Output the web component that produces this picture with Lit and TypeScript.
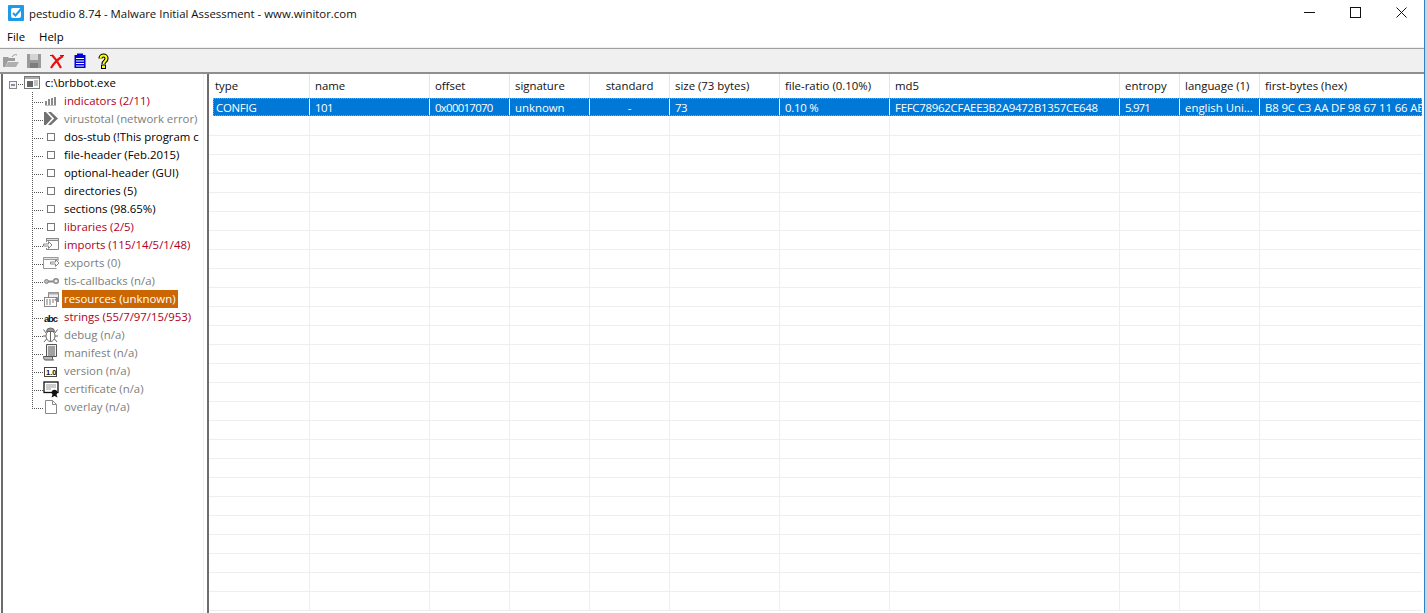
import { LitElement, html, css, svg } from "lit";
import { customElement } from "lit/decorators.js";

const guide = (last: boolean) => svg`
  <path d="M32.500 ${last ? "0V11" : "0V18"}" stroke="#555" stroke-dasharray="1 1" fill="none"/>
  <path d="M34 10.500H44" stroke="#555" stroke-dasharray="1 1" fill="none"/>`;

const icons: Record<string, unknown> = {
  bars: svg`<g fill="#8a8a8a"><rect x="45" y="9" width="2" height="4"/><rect x="48" y="7" width="2" height="6"/><rect x="51" y="6" width="2" height="7"/><rect x="54" y="5" width="2" height="8"/></g><path d="M45 13.500h11" stroke="#c4c4c4"/>`,
  vt: svg`<path d="M44 2h7l7 6.500-7 6.500h-7z" fill="#707070"/><path d="M46.500 1.500l6.500 7-6.500 7" fill="none" stroke="#fff" stroke-width="1.700"/>`,
  square: svg`<rect x="47.500" y="5.500" width="7" height="7" fill="#fff" stroke="#777"/>`,
  imp: svg`<path d="M46.500 6V2.500h12v11h-12V12" fill="#fff" stroke="#888"/><path d="M46.500 2.500h12v2h-12z" fill="#ddd" stroke="#888"/><path d="M43.500 8h5V5.500l3.500 3.500-3.500 3.500V10h-5z" fill="#fff" stroke="#888"/>`,
  exp: svg`<path d="M58 7V3.500H43.500v11h13" fill="#fff" stroke="#999"/><path d="M43.500 3.500h14.500v2H43.500z" fill="#e4e4e4" stroke="#999"/><path d="M50.500 8h5V5.500l3.500 3.500-3.500 3.500V10h-5z" fill="#fff" stroke="#888"/>`,
  key: svg`<circle cx="56" cy="9" r="2.300" fill="#eee" stroke="#888" stroke-width="1.400"/><path d="M45 9.500h8" stroke="#888" stroke-width="2"/><circle cx="46.500" cy="9.500" r="2" fill="#bbb" stroke="#888"/>`,
  res: svg`<rect x="48.500" y="2.500" width="10" height="9" fill="#eee" stroke="#888"/><rect x="48.500" y="2.500" width="10" height="2" fill="#aaa"/><rect x="44.500" y="7.500" width="12" height="9" fill="#fff" stroke="#888"/><path d="M46 10h2m1 0h2m1 0h2M46 12h2m1 0h2m1 0h2M46 14h2m1 0h2" stroke="#777"/><path d="M54 10l5-4v6z" fill="#888"/>`,
  bug: svg`<ellipse cx="50.500" cy="10" rx="4.500" ry="5.500" fill="#fff" stroke="#666"/><path d="M46.500 5.500a4 3.500 0 0 1 8 0z" fill="#999" stroke="#666"/><path d="M50.500 5v10.500M46 7l-2.500-3.500M55 7l2.500-3.500M46 10h-3M55 10h3M46.500 13l-2.500 3M54.500 13l2.500 3" stroke="#666" fill="none"/>`,
  man: svg`<path d="M46.500 .5h10v12h-10z" fill="#eee" stroke="#555"/><path d="M48 3h7M48 5h7M48 7h7M48 9h7M48 11h7" stroke="#555"/><path d="M43.500 12.500h9v2c0 1 .5 1.500 1 1.500h-8.500c-1 0-1.500-2-1.500-3.500z" fill="#bbb" stroke="#555"/>`,
  cert: svg`<rect x="44" y="2" width="14" height="10.500" fill="#fff" stroke="#111" stroke-width="1.300"/><path d="M46 5h10M46 7h10M46 9h5" stroke="#999"/><circle cx="54.500" cy="12.500" r="2.800" fill="#111"/><path d="M52.500 14.500l-1 3 3-1.500 3 1.500-1-3" fill="#111"/>`,
  page: svg`<path d="M45.500 2.500h7l4 4v9h-11z" fill="#fff" stroke="#888"/><path d="M52.500 2.500v4h4" fill="none" stroke="#888"/>`,
};

interface Item { icon: string; text: string; tone: "red" | "grey" | "black"; sel?: boolean; }
const items: Item[] = [
  { icon: "bars", text: "indicators (2/11)", tone: "red" },
  { icon: "vt", text: "virustotal (network error)", tone: "grey" },
  { icon: "square", text: "dos-stub (!This program c", tone: "black" },
  { icon: "square", text: "file-header (Feb.2015)", tone: "black" },
  { icon: "square", text: "optional-header (GUI)", tone: "black" },
  { icon: "square", text: "directories (5)", tone: "black" },
  { icon: "square", text: "sections (98.65%)", tone: "black" },
  { icon: "square", text: "libraries (2/5)", tone: "red" },
  { icon: "imp", text: "imports (115/14/5/1/48)", tone: "red" },
  { icon: "exp", text: "exports (0)", tone: "grey" },
  { icon: "key", text: "tls-callbacks (n/a)", tone: "grey" },
  { icon: "res", text: "resources (unknown)", tone: "grey", sel: true },
  { icon: "abc", text: "strings (55/7/97/15/953)", tone: "red" },
  { icon: "bug", text: "debug (n/a)", tone: "grey" },
  { icon: "man", text: "manifest (n/a)", tone: "grey" },
  { icon: "ver", text: "version (n/a)", tone: "grey" },
  { icon: "cert", text: "certificate (n/a)", tone: "grey" },
  { icon: "page", text: "overlay (n/a)", tone: "grey" },
];

const cols: { h: string; w: number; v: string; c?: boolean; cls?: string }[] = [
  { h: "type", w: 101, v: "CONFIG", cls: "first t3" },
  { h: "name", w: 120, v: "101", cls: "t6" },
  { h: "offset", w: 80, v: "0x00017070", cls: "t7" },
  { h: "signature", w: 80, v: "unknown" },
  { h: "standard", w: 80, v: "-", c: true },
  { h: "size (73 bytes)", w: 110, v: "73", cls: "t6" },
  { h: "file-ratio (0.10%)", w: 110, v: "0.10 %", cls: "t3" },
  { h: "md5", w: 230, v: "FEFC78962CFAEE3B2A9472B1357CE648", cls: "t3" },
  { h: "entropy", w: 60, v: "5.971", cls: "t8" },
  { h: "language (1)", w: 80, v: "english Uni..." },
  { h: "first-bytes (hex)", w: 162, v: "B8 9C C3 AA DF 98 67 11 66 AE", cls: "t1" },
];

@customElement("app-root")
export class AppRoot extends LitElement {
  static styles = css`
    :host { display: flex; width: 1427px; height: 613px; overflow: hidden; background: #fff;
      font-family: "Open Sans", "Noto Sans", sans-serif; font-size: 11.4px; color: #000; }
    .window { flex: 1; min-width: 0; display: flex; flex-direction: column; }
    .edge { width: 3px; flex: none; box-sizing: border-box; background: #ccd3d9; border-left: 1px solid #2f80c4; }
    .titlebar { height: 26px; display: flex; align-items: center; padding-left: 8px; flex: none; }
    .appicon { width: 16px; height: 16px; margin-right: 5px; flex: none; }
    .title { flex: 1; white-space: nowrap; color: #111; }
    .winbtns { display: flex; align-self: flex-start; }
    .winbtn { width: 46px; height: 24px; display: flex; align-items: center; justify-content: center; }
    .menubar { height: 22px; box-sizing: border-box; display: flex; align-items: center; padding-left: 7px; gap: 14px; flex: none; border-bottom: 1px solid #f0f0f0; }
    .toolbar { height: 23px; flex: none; background: #f0f0f0; border-top: 1px solid #a0a0a0; border-bottom: 2px solid #8f8f8f;
      display: flex; align-items: center; padding-left: 3px; gap: 7px; }
    .toolbar svg { width: 16px; height: 16px; flex: none; }
    .main { flex: 1; display: flex; min-height: 0; background: #fff; }
    .tree { width: 200px; flex: none; margin-left: 1px; border-left: 2px solid #6d6d6d; overflow: hidden; }
    .row { height: 18px; display: flex; align-items: center; white-space: nowrap; }
    .row svg { width: 59px; height: 18px; flex: none; }
    .lbl { line-height: 16px; padding: 0 2px; overflow: hidden; max-width: 135px; }
    .rootrow { display: flex; align-items: center; height: 18px; white-space: nowrap; }
    .rootrow svg { width: 42px; height: 18px; flex: none; }
    .root { line-height: 16px; }
    .red { color: #b0001e; }
    .grey { color: #7d7d7d; }
    .black { color: #000; }
    .sel { background: #cc6600; color: #fff; height: 18px; line-height: 18px; max-width: none; }
    .splitter { width: 4px; flex: none; box-sizing: border-box; border-left: 1px solid #eeeeee; }
    .panel { flex: 1; min-width: 0; border-left: 2px solid #6d6d6d; display: flex; flex-direction: column; overflow: hidden; }
    .hdr { display: flex; height: 24px; flex: none; margin-right: 2px; overflow: hidden; }
    .hdr div { box-sizing: border-box; border-right: 1px solid #e5e5e5; padding-left: 5px; line-height: 24px; white-space: nowrap; overflow: hidden; flex: none; color: #111; }
    .hdr div.first { padding-left: 6px; }
    .hdr div.c { padding-left: 0; text-align: center; }
    .hdr div:last-child { border-right: 0; }
    .body { flex: 1; min-height: 0; margin-right: 2px; overflow: hidden; }
    .tr { display: flex; height: 19px; box-sizing: border-box; border-bottom: 1px solid #eeeeee; }
    .td { flex: none; box-sizing: border-box; border-right: 1px solid #eeeeee; padding-left: 5px; line-height: 18px; white-space: nowrap; overflow: hidden; }
    .td.c { padding-left: 0; text-align: center; }
    .td:last-child { border-right: 0; }
    .tr.selected { background: #0078d7; color: #fff; margin: 0 0 1px 4px; outline: 1px dotted #e8902f; outline-offset: -1px; height: 18px; border-bottom: 0; }
    .tr.selected .td { border-right: 1px solid #fff; line-height: 20px; }
    .tr.selected .td:last-child { border-right: 0; }
    .tr.selected .td.first { padding-left: 3px; }
    .t1 { letter-spacing: -0.12px; }
    .t3 { letter-spacing: -0.25px; }
    .t6 { letter-spacing: -0.5px; }
    .t7 { letter-spacing: -0.7px; }
    .t8 { letter-spacing: -0.8px; }
  `;

  private iconFor(i: Item) {
    if (i.icon === "abc")
      return svg`<text x="44" y="13.500" font-family="Liberation Sans, sans-serif" font-size="9.500" font-weight="700" fill="#111" textLength="14">abc</text>`;
    if (i.icon === "ver")
      return svg`<rect x="44.500" y="5.500" width="12" height="9" fill="#fff" stroke="#444"/><text x="46" y="13" font-family="Liberation Sans, sans-serif" font-size="7.500" font-weight="700" fill="#111">1.0</text>`;
    return icons[i.icon];
  }

  render() {
    return html`
      <div class="window">
        <div class="titlebar">
          <svg class="appicon" viewBox="0 0 16 16"><rect width="16" height="16" rx="1" fill="#1e9be8"/><rect x="3" y="3" width="10" height="10" rx="2" fill="#fff"/><path d="M5 8l2.500 2.500L14 3" fill="none" stroke="#1e9be8" stroke-width="2"/></svg>
          <span class="title">pestudio 8.74 - Malware Initial Assessment - www.winitor.com</span>
          <div class="winbtns">
            <div class="winbtn"><svg width="11" height="11"><path d="M0 5.500h11" stroke="#111"/></svg></div>
            <div class="winbtn"><svg width="11" height="11"><rect x=".5" y=".5" width="10" height="10" fill="none" stroke="#111"/></svg></div>
            <div class="winbtn"><svg width="11" height="11"><path d="M.5.5l10 10M10.500.5l-10 10" stroke="#111"/></svg></div>
          </div>
        </div>
        <div class="menubar"><span>File</span><span>Help</span></div>
        <div class="toolbar">
          <svg viewBox="0 0 16 16"><path d="M0 14V4h5l1 1h6v3H5l-3 6z" fill="#9c9c9c"/><path d="M2 14l3-5h11l-3 5z" fill="#b0b0b0"/><path d="M9 4c1-2 3-3 5-2" stroke="#999" fill="none"/></svg>
          <svg viewBox="0 0 16 16"><path d="M1 1h14v14H1z" fill="#9a9a9a"/><rect x="4" y="1" width="8" height="6" fill="#d4d4d4"/><rect x="4" y="10" width="8" height="5" fill="#7d7d7d"/></svg>
          <svg viewBox="0 0 16 16"><path d="M3 2c3 3 6 7 9 13M14 3C9 6 5 10 2 15" fill="none" stroke="#e81010" stroke-width="2.200"/><path d="M1 2.500h3M11 2.500h4" stroke="#444"/></svg>
          <svg viewBox="0 0 16 16"><rect x="2.500" y="2" width="11" height="13" fill="#0000d8"/><rect x="5" y="0.500" width="6" height="3" fill="#0000d8"/><path d="M4 5.500h8M4 8h8M4 10.500h8M4 13h8" stroke="#fff" stroke-width="1"/></svg>
          <svg viewBox="0 0 16 16"><path d="M5.500 5.500c0-4 6-4 6 0 0 3-3 2.500-3 5.500" fill="none" stroke="#000" stroke-width="4.200"/><path d="M5.500 5.500c0-4 6-4 6 0 0 3-3 2.500-3 5.500" fill="none" stroke="#ffff00" stroke-width="2"/><rect x="6.500" y="12" width="4" height="3.500" fill="#ffff00" stroke="#000"/></svg>
        </div>
        <div class="main">
          <div class="tree">
            <div class="rootrow">
              <svg viewBox="3 0 42 18">
                <rect x="9.500" y="7.500" width="7" height="7" fill="#f4f4ff" stroke="#888"/>
                <path d="M11 11h4" stroke="#224"/>
                <path d="M18 10.500h6" stroke="#555" stroke-dasharray="1 1"/>
                <rect x="24.500" y="2.500" width="15" height="12" fill="#fff" stroke="#777"/>
                <rect x="25" y="3" width="14" height="2" fill="#aaa"/>
                <rect x="27" y="7" width="6" height="6" fill="#666"/>
                <path d="M34 7h4M34 9h4M34 11h4" stroke="#888"/>
              </svg>
              <span class="root">c:\\brbbot.exe</span>
            </div>
            ${items.map((it, idx) => html`
              <div class="row">
                <svg viewBox="3 0 59 18">
                  ${guide(idx === items.length - 1)}
                  ${this.iconFor(it)}
                </svg>
                <span class=${it.sel ? "lbl sel" : `lbl ${it.tone}`}>${it.text}</span>
              </div>`)}
          </div>
          <div class="splitter"></div>
          <div class="panel">
            <div class="hdr">
              ${cols.map((c, i) => html`<div class="${c.c ? "c" : ""} ${i === 0 ? "first" : ""}" style="width:${c.w}px">${c.h}</div>`)}
            </div>
            <div class="body">
              <div class="tr selected">
                ${cols.map((c, i) => html`<div class="td ${c.c ? "c" : ""} ${c.cls ?? ""}" style="width:${i === 0 ? c.w - 4 : c.w}px">${c.v}</div>`)}
              </div>
              ${Array.from({ length: 26 }).map(() => html`
                <div class="tr">${cols.map((c) => html`<div class="td" style="width:${c.w}px"></div>`)}</div>`)}
            </div>
          </div>
        </div>
      </div>
      <div class="edge"></div>
    `;
  }
}
